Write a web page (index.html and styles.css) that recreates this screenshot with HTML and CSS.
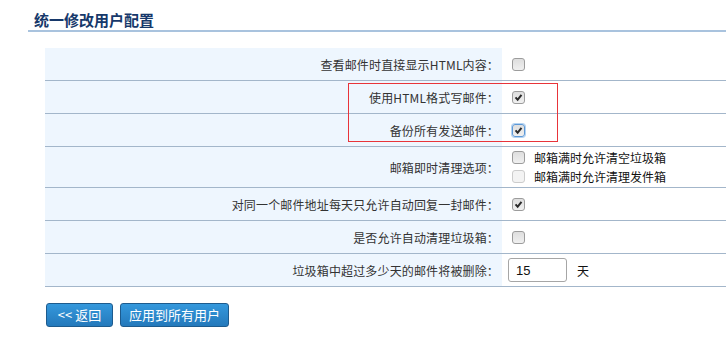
FILE: index.html
```html
<!DOCTYPE html>
<html lang="zh-CN">
<head>
<meta charset="utf-8">
<title>统一修改用户配置</title>
<link rel="stylesheet" href="styles.css">
</head>
<body>
<div class="page">
  <h1 class="title">统一修改用户配置</h1>
  <div class="form">
    <div class="row">
      <div class="label">查看邮件时直接显示HTML内容：</div>
      <div class="value"><span class="cb"></span></div>
    </div>
    <div class="row">
      <div class="label">使用HTML格式写邮件：</div>
      <div class="value"><span class="cb checked"><svg viewBox="0 0 13 13"><path d="M3 6.4 L5.5 9.2 L10 3.4"/></svg></span></div>
    </div>
    <div class="row">
      <div class="label">备份所有发送邮件：</div>
      <div class="value"><span class="cb checked focus"><svg viewBox="0 0 13 13"><path d="M3 6.4 L5.5 9.2 L10 3.4"/></svg></span></div>
    </div>
    <div class="row tall">
      <div class="label">邮箱即时清理选项：</div>
      <div class="value stack">
        <div class="opt"><span class="cb"></span><span class="opt-text">邮箱满时允许清空垃圾箱</span></div>
        <div class="opt"><span class="cb disabled"></span><span class="opt-text">邮箱满时允许清理发件箱</span></div>
      </div>
    </div>
    <div class="row">
      <div class="label">对同一个邮件地址每天只允许自动回复一封邮件：</div>
      <div class="value"><span class="cb checked"><svg viewBox="0 0 13 13"><path d="M3 6.4 L5.5 9.2 L10 3.4"/></svg></span></div>
    </div>
    <div class="row">
      <div class="label">是否允许自动清理垃圾箱：</div>
      <div class="value"><span class="cb"></span></div>
    </div>
    <div class="row">
      <div class="label">垃圾箱中超过多少天的邮件将被删除：</div>
      <div class="value"><span class="input">15</span><span class="unit">天</span></div>
    </div>
  </div>
  <div class="actions">
    <button class="btn btn-back">&lt;&lt; 返回</button>
    <button class="btn btn-apply">应用到所有用户</button>
  </div>
</div>
<div class="highlight"></div>
</body>
</html>
```

FILE: styles.css
```css
html, body {
  margin: 0;
  padding: 0;
  background: #ffffff;
}

body {
  font-family: "Noto Sans CJK SC", "Liberation Sans", sans-serif;
  font-size: 12px;
  color: #333333;
  position: relative;
}

.page {
  padding: 9px 0 0 28px;
}

.title {
  margin: 0;
  padding: 0 0 0 6px;
  height: 21px;
  line-height: 21px;
  font-size: 15px;
  font-weight: bold;
  color: #16386a;
  border-bottom: 2px solid #a9c3de;
}

.form {
  margin: 16px 0 0 17px;
}

.row {
  display: grid;
  grid-template-columns: 457px 1fr;
  height: 32px;
  border-bottom: 1px solid #a3b6ca;
}

.row.tall {
  height: 40px;
}

.label {
  background: #eef6fe;
  display: flex;
  align-items: center;
  justify-content: flex-end;
  padding-right: 3px;
  white-space: nowrap;
  letter-spacing: 0.15px;
}

.value {
  display: flex;
  align-items: center;
  padding-left: 10px;
}

.value.stack {
  flex-direction: column;
  align-items: flex-start;
  justify-content: center;
  gap: 6px;
}

.opt {
  display: flex;
  align-items: center;
  height: 13px;
}

.opt-text {
  margin-left: 9px;
  color: #111111;
}

.cb {
  display: inline-block;
  box-sizing: border-box;
  width: 13px;
  height: 13px;
  border: 1px solid #9c9c9c;
  border-radius: 3px;
  background: linear-gradient(#dedede, #f0f0f0);
}

.cb svg {
  display: block;
  width: 11px;
  height: 11px;
}

.cb svg path {
  fill: none;
  stroke: #2a2a2a;
  stroke-width: 2.4;
}

.cb.focus {
  border-color: #5d98d6;
  box-shadow: 0 0 0 1px #b3d3f2;
}

.cb.disabled {
  border-color: #cccccc;
  background: #f3f3f3;
}

.input {
  display: inline-flex;
  align-items: center;
  box-sizing: border-box;
  width: 59px;
  height: 24px;
  margin-left: -4px;
  padding-left: 7px;
  border: 1px solid #a6a6a6;
  border-radius: 3px;
  font-family: "Liberation Sans", sans-serif;
  font-size: 13px;
  color: #111111;
}

.unit {
  margin-left: 10px;
  color: #111111;
}

.actions {
  display: flex;
  gap: 7px;
  margin: 16px 0 0 18px;
}

.btn {
  box-sizing: border-box;
  height: 24px;
  padding: 0;
  border: 1px solid #1d5b8e;
  border-radius: 3px;
  background: linear-gradient(#3498dc, #2479bb);
  color: #ffffff;
  font-family: "Noto Sans CJK SC", "Liberation Sans", sans-serif;
  font-size: 13px;
  line-height: 22px;
  text-align: center;
}

.btn-back {
  width: 67px;
}

.btn-apply {
  width: 109px;
}

.highlight {
  position: absolute;
  left: 348px;
  top: 83px;
  width: 210px;
  height: 59px;
  box-sizing: border-box;
  border: 1px solid #e8343a;
  pointer-events: none;
}
```
